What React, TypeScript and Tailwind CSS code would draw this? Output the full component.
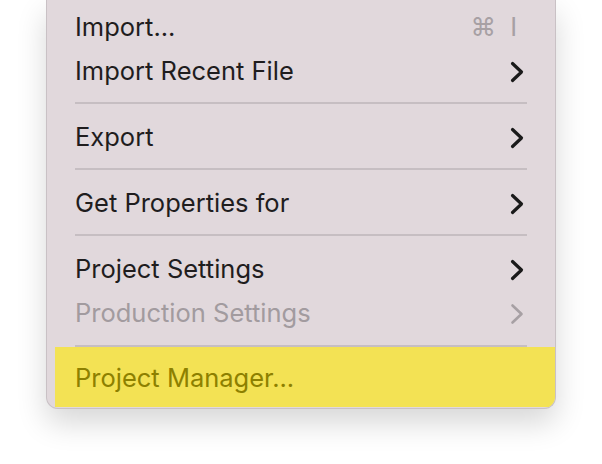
import React from 'react';

type Item = {
  label: string;
  sub?: boolean;
  shortcut?: string;
  disabled?: boolean;
};

function Chevron({ disabled }: { disabled?: boolean }) {
  return (
    <svg width="14" height="22" viewBox="0 0 14 22" className="shrink-0">
      <polyline
        points="2.5,2.5 11.5,11 2.5,19.5"
        fill="none"
        stroke={disabled ? '#a7a0a4' : '#1a1a1a'}
        strokeWidth={disabled ? 2.6 : 3.2}
        strokeLinecap="round"
        strokeLinejoin="round"
      />
    </svg>
  );
}

function Row({ item }: { item: Item }) {
  return (
    <div
      className={`flex h-[44px] items-center justify-between pt-[3px] pl-[28px] pr-[31px] ${
        item.disabled ? 'text-[#a29b9f]' : 'text-[#1f1d1e]'
      }`}
    >
      <span>{item.label}</span>
      {item.sub && <Chevron disabled={item.disabled} />}
      {item.shortcut && (
        <span className="flex items-center gap-[14px] pr-[7px] text-[#a7a0a4]">
          <span>⌘</span>
          <span>I</span>
        </span>
      )}
    </div>
  );
}

function Separator() {
  return (
    <div className="flex h-[22px] items-center px-[28px]">
      <div className="h-[2px] w-full bg-[#c6bec2]" />
    </div>
  );
}

const groups: Item[][] = [
  [{ label: 'Import...', shortcut: '⌘ I' }, { label: 'Import Recent File', sub: true }],
  [{ label: 'Export', sub: true }],
  [{ label: 'Get Properties for', sub: true }],
  [
    { label: 'Project Settings', sub: true },
    { label: 'Production Settings', sub: true, disabled: true },
  ],
];

export default function App() {
  return (
    <div
      className="h-[464px] w-[602px] overflow-hidden bg-white"
      style={{ fontFamily: 'Inter, "Noto Sans", sans-serif' }}
    >
      <div className="ml-[46px] w-[510px] overflow-hidden rounded-b-[12px] border-x border-b border-[#c9c1c5] bg-[#e1d8dc] pt-[4px] pb-[1px] text-[25.5px] shadow-[0_14px_30px_rgba(0,0,0,0.16)]">
        {groups.map((g, i) => (
          <div key={i}>
            {i > 0 && <Separator />}
            {g.map((item) => (
              <Row key={item.label} item={item} />
            ))}
          </div>
        ))}
        <div className="flex h-[13px] items-start px-[28px] pt-[11px]">
          <div className="h-[2px] w-full bg-[#c6bec2]" />
        </div>
        <div className="ml-[8px] flex h-[60px] items-center bg-[#f3e254] pl-[20px] pt-[2px] text-[#8d8000]">
          Project Manager...
        </div>
      </div>
    </div>
  );
}
